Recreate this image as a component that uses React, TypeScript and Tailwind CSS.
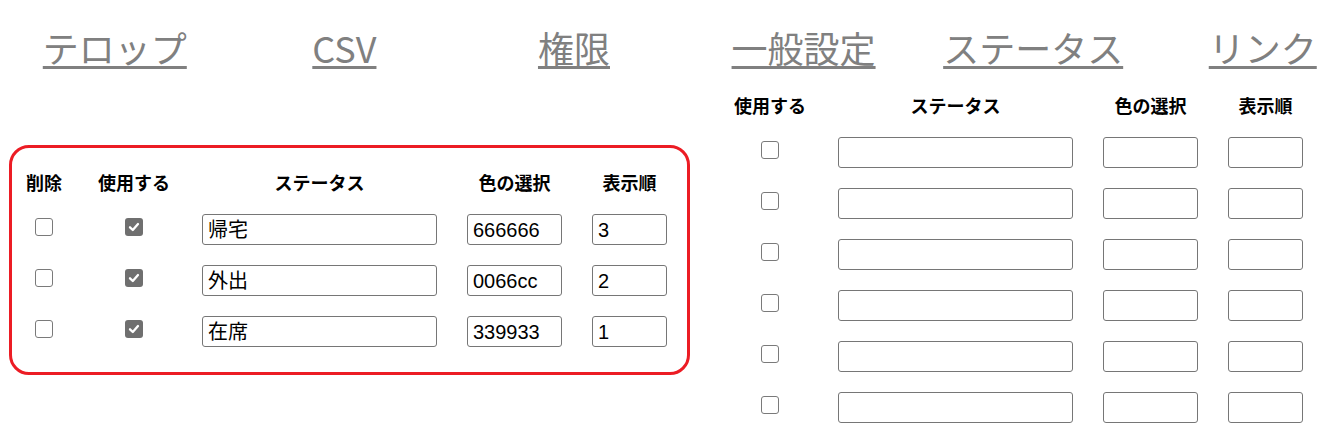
import React from "react";

const FONT = { fontFamily: '"Noto Sans CJK JP", "Liberation Sans", sans-serif' };

const navItems = ["テロップ", "CSV", "権限", "一般設定", "ステータス", "リンク"];

function Box({ checked }: { checked?: boolean }) {
  if (checked) {
    return (
      <div className="w-[18px] h-[18px] -mt-[6px] rounded-[3px] bg-[#6f6f6f] flex items-center justify-center">
        <svg width="14" height="14" viewBox="0 0 14 14">
          <path d="M3 7.3 L5.8 10 L11 4" fill="none" stroke="#fff" strokeWidth="2.3" strokeLinecap="round" strokeLinejoin="round" />
        </svg>
      </div>
    );
  }
  return <div className="w-[18px] h-[18px] -mt-[6px] rounded-[3px] border-[1.5px] border-[#7a7a7a] bg-white" />;
}

function Field({ w, value }: { w: string; value?: string }) {
  return (
    <div
      className={`${w} h-[31px] border border-[#767676] rounded-[3px] bg-white pl-[5px] flex items-center text-[20px] leading-none text-black`}
      style={{ fontFamily: '"Liberation Sans", "Noto Sans CJK JP", sans-serif' }}
    >
      {value}
    </div>
  );
}

const leftRows = [
  { name: "帰宅", color: "666666", order: "3" },
  { name: "外出", color: "0066cc", order: "2" },
  { name: "在席", color: "339933", order: "1" },
];

export default function App() {
  return (
    <div className="w-[1344px] h-[444px] bg-white overflow-hidden" style={FONT}>
      <div className="h-[83px] flex pt-[23px]">
        {navItems.map((t) => (
          <div key={t} className="w-[229.6px] shrink-0 text-center">
            <span className="text-[36px] leading-[48px] text-[#808080] underline decoration-[3px] underline-offset-[3px]">
              {t}
            </span>
          </div>
        ))}
      </div>
      <div className="flex items-start">
        <div className="ml-[9px] mt-[62px] w-[681px] h-[230px] border-[3px] border-[#ec1c24] rounded-[20px] pt-[12px]">
          <div className="grid grid-cols-[64px_116px_255px_135px_95px] h-[44px] items-center text-center text-[18px] font-bold text-black">
            <div>削除</div>
            <div>使用する</div>
            <div>ステータス</div>
            <div>色の選択</div>
            <div>表示順</div>
          </div>
          {leftRows.map((r) => (
            <div key={r.name} className="grid grid-cols-[64px_116px_255px_135px_95px] h-[51px] items-center">
              <div className="flex justify-center"><Box /></div>
              <div className="flex justify-center"><Box checked /></div>
              <div className="flex justify-center"><Field w="w-[235px]" value={r.name} /></div>
              <div className="flex justify-center"><Field w="w-[95px]" value={r.color} /></div>
              <div className="flex justify-center"><Field w="w-[75px]" value={r.order} /></div>
            </div>
          ))}
        </div>
        <div className="ml-[22px]">
          <div className="grid grid-cols-[116px_255px_135px_95px] h-[44px] items-center text-center text-[18px] font-bold text-black">
            <div>使用する</div>
            <div>ステータス</div>
            <div>色の選択</div>
            <div>表示順</div>
          </div>
          {[0, 1, 2, 3, 4, 5].map((i) => (
            <div key={i} className="grid grid-cols-[116px_255px_135px_95px] h-[51px] items-center">
              <div className="flex justify-center"><Box /></div>
              <div className="flex justify-center"><Field w="w-[235px]" /></div>
              <div className="flex justify-center"><Field w="w-[95px]" /></div>
              <div className="flex justify-center"><Field w="w-[75px]" /></div>
            </div>
          ))}
        </div>
      </div>
    </div>
  );
}
